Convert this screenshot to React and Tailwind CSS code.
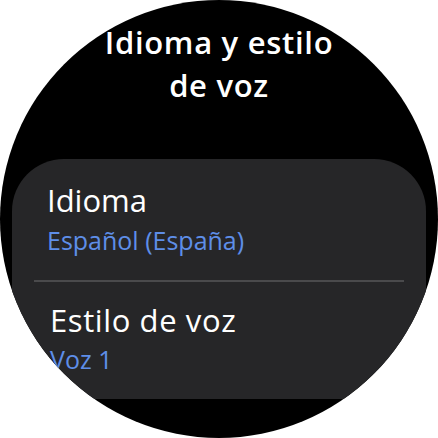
export default function App() {
  const font = { fontFamily: '"Open Sans", "Noto Sans", sans-serif' };
  return (
    <div className="w-[438px] h-[438px] bg-white" style={font}>
      <div className="w-[438px] h-[438px] rounded-full bg-black overflow-hidden flex flex-col">
        <div className="pt-[21px] text-center text-white text-[31px] leading-[43px] font-semibold tracking-[0.7px]">
          <div>Idioma y estilo</div>
          <div>de voz</div>
        </div>
        <div className="mt-[52px] mx-[12px] h-[240px] bg-[#262628] rounded-t-[52px] flex flex-col">
          <div className="pl-[35px] pt-[23px]">
            <div className="text-white text-[31px] leading-[36px]">Idioma</div>
            <div className="text-[#5e8ee8] text-[25px] leading-[30px] mt-[7px]">Español (España)</div>
          </div>
          <div className="mt-[25px] ml-[22px] w-[370px] h-[2px] bg-[#4a4a4c]"></div>
          <div className="pl-[38px] pt-[20px]">
            <div className="text-white text-[31px] leading-[36px] tracking-[0.6px]">Estilo de voz</div>
            <div className="text-[#5e8ee8] text-[25px] leading-[30px] mt-[6px]">Voz 1</div>
          </div>
        </div>
      </div>
    </div>
  );
}
